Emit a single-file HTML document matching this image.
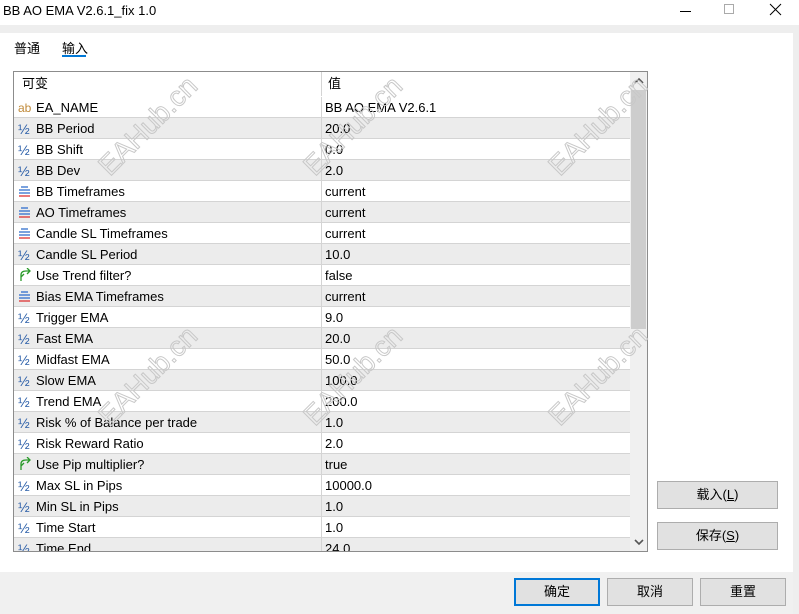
<!DOCTYPE html>
<html style="overflow:hidden;width:799px;height:614px"><head><meta charset="utf-8"><style>
*{margin:0;padding:0;box-sizing:border-box}
body{width:799px;height:614px;overflow:hidden;position:relative;background:#fff;font-family:"Liberation Sans","Noto Sans CJK SC",sans-serif;font-size:13px;color:#000}
.abs{position:absolute}
.title{left:3px;top:3px;font-size:13px}
.band{left:0;top:25px;width:799px;height:8px;background:#eeeeee}
.rstrip{left:793px;top:25px;width:6px;height:589px;background:#eeeeee}
.tab{top:38px;font-size:13px}
.table{left:13px;top:71px;width:635px;height:481px;border:1px solid #8c8c8c;overflow:hidden;background:#fff}
.row{position:absolute;left:0;width:616px;height:21px;border-bottom:1px solid #d4d4d4;line-height:22px}
.row.g{background:#ececec}
.c1{position:absolute;left:22px}
.c2{position:absolute;left:311px}
.ic{position:absolute;left:4px;top:0;width:14px;font-size:12px}
.div{position:absolute;left:307px;top:0;width:1px;height:24px;background:#d4d4d4}
.sb{position:absolute;left:616px;top:0;width:17px;height:479px;background:#f0f0f0}
.thumb{position:absolute;left:617px;top:18px;width:15px;height:239px;background:#cdcdcd}
.btn{position:absolute;background:#e1e1e1;border:1px solid #adadad;text-align:center;font-size:13px}
.bot{left:0;top:572px;width:793px;height:42px;background:#f0f0f0}
.wm{position:absolute;font-size:28px;color:transparent;-webkit-text-stroke:1px #c8c8c8;transform:rotate(-45deg);font-family:"Liberation Sans",sans-serif;white-space:nowrap}
</style></head><body>
<div class="abs title">BB AO EMA V2.6.1_fix 1.0</div>
<div class="abs" style="left:680px;top:11px;width:11px;height:1px;background:#000"></div>
<div class="abs" style="left:724px;top:4px;width:10px;height:10px;border:1px solid #aaa"></div>
<svg class="abs" style="left:769px;top:3px" width="13" height="13"><path d="M1 1L12 12M12 1L1 12" stroke="#000" stroke-width="1"/></svg>
<div class="abs band"></div>
<div class="abs rstrip"></div>
<div class="abs tab" style="left:14px">普通</div>
<div class="abs tab" style="left:62px">输入</div>
<div class="abs" style="left:62px;top:55px;width:24px;height:2px;background:#0078d7"></div>

<div class="abs table">
<div class="row" style="top:0;height:25px;line-height:24px;border-bottom:none"><span class="c1" style="left:8px">可变</span><span class="c2" style="left:314px">值</span></div>
<div class="div"></div>
<div id="rows"></div>
<div class="sb"></div>
<div class="thumb"></div>
<svg style="position:absolute;left:620px;top:5px" width="10" height="8"><path d="M1 6L5 2L9 6" stroke="#555" stroke-width="1.6" fill="none"/></svg>
<svg style="position:absolute;left:620px;top:466px" width="10" height="8"><path d="M1 2L5 6L9 2" stroke="#555" stroke-width="1.6" fill="none"/></svg>
</div>

<div class="btn" style="left:657px;top:481px;width:121px;height:28px;line-height:26px">载入(<u>L</u>)</div>
<div class="btn" style="left:657px;top:522px;width:121px;height:28px;line-height:26px">保存(<u>S</u>)</div>
<div class="abs bot"></div>
<div class="btn" style="left:514px;top:578px;width:86px;height:28px;line-height:24px;border:2px solid #0078d7">确定</div>
<div class="btn" style="left:607px;top:578px;width:86px;height:28px;line-height:26px">取消</div>
<div class="btn" style="left:700px;top:578px;width:86px;height:28px;line-height:26px">重置</div>

<div class="wm" style="left:85px;top:110px">EAHub.cn</div>
<div class="wm" style="left:290px;top:110px">EAHub.cn</div>
<div class="wm" style="left:535px;top:110px">EAHub.cn</div>
<div class="wm" style="left:85px;top:360px">EAHub.cn</div>
<div class="wm" style="left:290px;top:360px">EAHub.cn</div>
<div class="wm" style="left:535px;top:360px">EAHub.cn</div>

<script>
var R=[["ab","EA_NAME","BB AO EMA V2.6.1"],["h","BB Period","20.0"],["h","BB Shift","0.0"],["h","BB Dev","2.0"],["l","BB Timeframes","current"],["l","AO Timeframes","current"],["l","Candle SL Timeframes","current"],["h","Candle SL Period","10.0"],["b","Use Trend filter?","false"],["l","Bias EMA Timeframes","current"],["h","Trigger EMA","9.0"],["h","Fast EMA","20.0"],["h","Midfast EMA","50.0"],["h","Slow EMA","100.0"],["h","Trend EMA","200.0"],["h","Risk % of Balance per trade","1.0"],["h","Risk Reward Ratio","2.0"],["b","Use Pip multiplier?","true"],["h","Max SL in Pips","10000.0"],["h","Min SL in Pips","1.0"],["h","Time Start","1.0"],["h","Time End","24.0"]];
var s="";
R.forEach(function(r,i){
var ic="";
if(r[0]=="ab")ic='<span class="ic" style="color:#c08a3a">ab</span>';
else if(r[0]=="h")ic='<span class="ic" style="color:#2a5ea8;font-size:14px">½</span>';
else if(r[0]=="l")ic='<svg class="ic" style="top:4px" width="13" height="12"><path d="M3 2H10M1 5H12M1 8H12" stroke="#2a6acb" stroke-width="1.3"/><path d="M1 11H12" stroke="#d33" stroke-width="1.3"/></svg>';
else ic='<svg class="ic" style="top:3px" width="14" height="14"><path d="M3 13L3 7Q3 3 8 3L12 3M9 0L12 3L9 6M3 9L6 6" stroke="#2a9a2a" stroke-width="1.3" fill="none"/></svg>';
s+='<div class="row'+(i%2?' g':'')+'" style="top:'+(25+21*i)+'px">'+ic+'<span class="c1">'+r[1]+'</span><span class="c2">'+r[2]+'</span><div style="position:absolute;left:307px;top:0;width:1px;height:21px;background:#d4d4d4"></div></div>';
});
document.getElementById("rows").innerHTML=s;
</script>
</body></html>
